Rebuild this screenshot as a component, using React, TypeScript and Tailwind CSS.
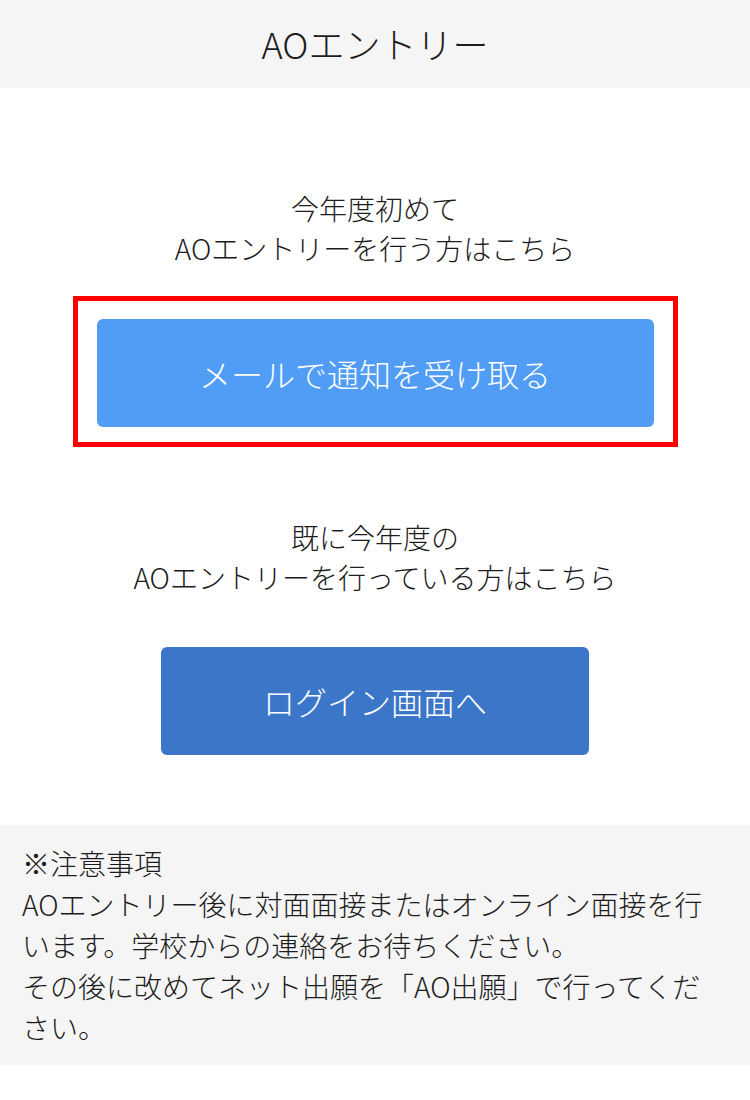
export default function App() {
  return (
    <div className="min-h-[1100px] bg-white text-[#1c1c1c] font-light font-['Noto_Sans_CJK_JP','Noto_Sans',sans-serif]">
      {/* header */}
      <header className="h-[88px] bg-[#f5f5f5] flex items-center justify-center">
        <h1 className="text-[36px] leading-none font-light -mt-[3px]">AOエントリー</h1>
      </header>

      <main className="flex flex-col items-center pt-[100px]">
        <p className="text-[28px] leading-[40px] text-center">
          今年度初めて
          <br />
          AOエントリーを行う方はこちら
        </p>

        <div className="mt-[28px] w-[605px] border-[5px] border-[#ff0000] pt-[18px] pb-[15px] px-[19px]">
          <button className="w-full h-[108px] rounded-[6px] bg-[#519df5] text-white text-[32px] font-light flex items-center justify-center">
            メールで通知を受け取る
          </button>
        </div>

        <p className="mt-[70px] text-[28px] leading-[40px] text-center">
          既に今年度の
          <br />
          AOエントリーを行っている方はこちら
        </p>

        <button className="mt-[50px] w-[428px] h-[108px] rounded-[6px] bg-[#3b76c9] text-white text-[32px] font-light flex items-center justify-center">
          ログイン画面へ
        </button>
      </main>

      {/* notes */}
      <section className="mt-[70px] bg-[#f5f5f5] pl-[22px] pr-[16px] pt-[18px] pb-[17px] text-[28px] leading-[41px]">
        <p>※注意事項</p>
        <p>
          AOエントリー後に対面面接またはオンライン面接を行
          <br />
          います。学校からの連絡をお待ちください。
        </p>
        <p>
          その後に改めてネット出願を「AO出願」で行ってくだ
          <br />
          さい。
        </p>
      </section>
    </div>
  )
}
